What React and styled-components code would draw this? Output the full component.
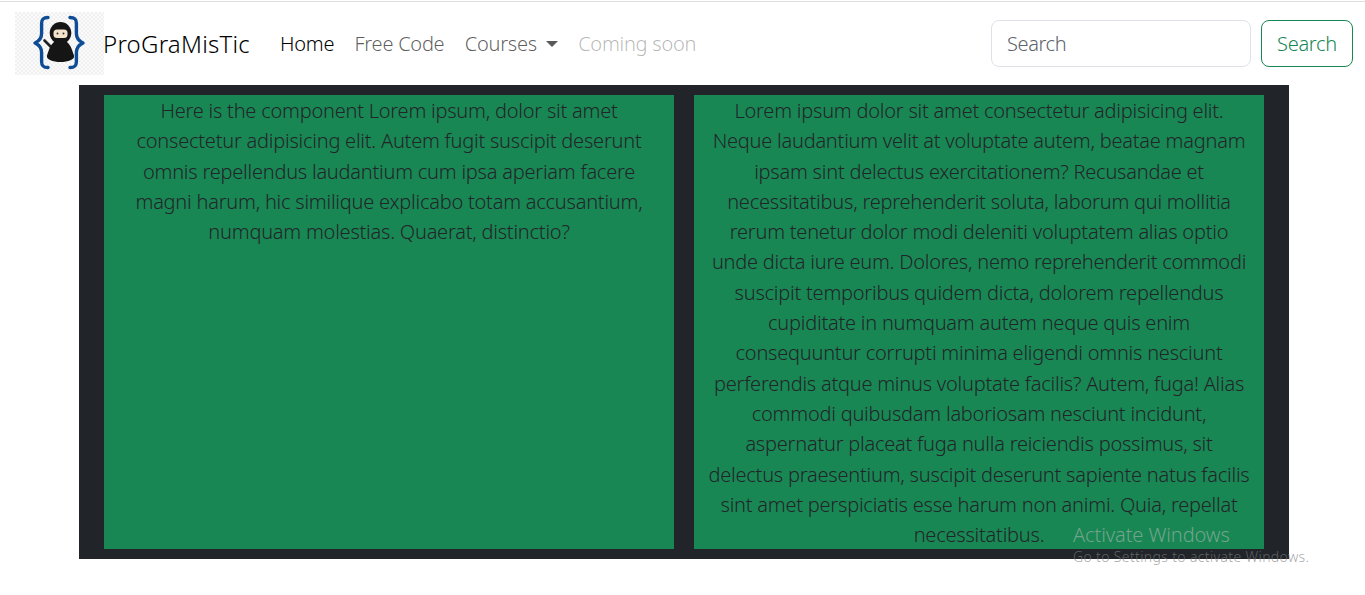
import React from "react";
import styled, { createGlobalStyle } from "styled-components";

const GlobalStyle = createGlobalStyle`
  body {
    margin: 0;
    background: #fff;
    font-family: "Noto Sans", "Open Sans", sans-serif;
    color: #212529;
  }
`;

const TopRule = styled.div`
  height: 1px;
  margin-top: 1px;
  background: #dedede;
`;

const Navbar = styled.nav`
  display: flex;
  align-items: center;
  height: 83px;
  padding: 0 12px 0 15px;
  box-sizing: border-box;
`;

const Brand = styled.a`
  display: flex;
  align-items: flex-end;
  width: 265px;
  font-size: 24px;
  font-weight: 300;
  color: #000;
  letter-spacing: 0.25px;
`;

const BrandName = styled.span`
  margin-left: -1px;
  line-height: 36px;
  margin-bottom: 13px;
`;

const Logo = styled.svg`
  width: 89px;
  height: 63px;
  flex: none;
`;

const Links = styled.ul`
  display: flex;
  align-items: center;
  gap: 20.3px;
  flex: 1;
  margin: 0;
  padding: 0;
  list-style: none;
  font-size: 20px;
  font-weight: 300;
`;

const Link = styled.li`
  color: ${(props) => props.color || "rgba(0, 0, 0, 0.65)"};
  letter-spacing: -0.25px;
`;

const Caret = styled.span`
  display: inline-block;
  margin-left: 9px;
  vertical-align: 4px;
  border-top: 6px solid rgba(0, 0, 0, 0.65);
  border-left: 6px solid transparent;
  border-right: 6px solid transparent;
`;

const SearchForm = styled.form`
  display: flex;
  gap: 10px;
`;

const SearchInput = styled.input`
  width: 260px;
  height: 47px;
  box-sizing: border-box;
  padding: 0 15px;
  border: 1px solid #dee2e6;
  border-radius: 8px;
  font: inherit;
  font-size: 20px;
  font-weight: 300;
  letter-spacing: -0.4px;
  color: #212529;
  &::placeholder {
    color: #5c636a;
    opacity: 1;
  }
`;

const SearchButton = styled.button`
  width: 92px;
  height: 47px;
  padding: 0;
  border: 1px solid #198754;
  border-radius: 8px;
  background: transparent;
  color: #198754;
  font: inherit;
  font-size: 20px;
  font-weight: 300;
  letter-spacing: -0.3px;
`;

const Content = styled.main`
  display: flex;
  gap: 20px;
  width: 1210px;
  height: 474px;
  box-sizing: border-box;
  margin: 0 0 0 79px;
  padding: 10px 25px;
  background: #212529;
`;

const Column = styled.div`
  flex: 1;
  padding-top: 1px;
  background: #198754;
  color: #212529;
  font-size: 20px;
  font-weight: 300;
  line-height: 30.29px;
  letter-spacing: -0.23px;
  text-align: center;
  white-space: nowrap;
`;

const Watermark = styled.div`
  position: absolute;
  left: 1073px;
  top: 522px;
  color: rgba(190, 190, 190, 0.55);
  font-family: "Noto Sans", sans-serif;
  font-weight: 300;
`;

const WatermarkTitle = styled.div`
  font-size: 20px;
  line-height: 26px;
  letter-spacing: -0.1px;
`;

const WatermarkNote = styled.div`
  font-size: 14px;
  line-height: 18px;
  letter-spacing: 0.36px;
  color: rgba(125, 125, 125, 0.7);
`;

const leftLines = [
  "Here is the component Lorem ipsum, dolor sit amet",
  "consectetur adipisicing elit. Autem fugit suscipit deserunt",
  "omnis repellendus laudantium cum ipsa aperiam facere",
  "magni harum, hic similique explicabo totam accusantium,",
  "numquam molestias. Quaerat, distinctio?",
];

const rightLines = [
  "Lorem ipsum dolor sit amet consectetur adipisicing elit.",
  "Neque laudantium velit at voluptate autem, beatae magnam",
  "ipsam sint delectus exercitationem? Recusandae et",
  "necessitatibus, reprehenderit soluta, laborum qui mollitia",
  "rerum tenetur dolor modi deleniti voluptatem alias optio",
  "unde dicta iure eum. Dolores, nemo reprehenderit commodi",
  "suscipit temporibus quidem dicta, dolorem repellendus",
  "cupiditate in numquam autem neque quis enim",
  "consequuntur corrupti minima eligendi omnis nesciunt",
  "perferendis atque minus voluptate facilis? Autem, fuga! Alias",
  "commodi quibusdam laboriosam nesciunt incidunt,",
  "aspernatur placeat fuga nulla reiciendis possimus, sit",
  "delectus praesentium, suscipit deserunt sapiente natus facilis",
  "sint amet perspiciatis esse harum non animi. Quia, repellat",
  "necessitatibus.",
];

const NinjaLogo = () => (
  <Logo viewBox="0 0 89 63">
    <defs>
      <pattern id="checker" width="4" height="4" patternUnits="userSpaceOnUse">
        <rect width="4" height="4" fill="#fbfbfb" />
        <rect width="2" height="2" fill="#f0f0f0" />
        <rect x="2" y="2" width="2" height="2" fill="#f0f0f0" />
      </pattern>
    </defs>
    <rect width="89" height="63" fill="url(#checker)" />
    <g fill="none" stroke="#0f4c96" strokeWidth="3.4" strokeLinecap="round" strokeLinejoin="round">
      <path d="M33 5.500c-4.500 0-6.400 1.600-6.400 6v10c0 4.500-2.400 7.500-6.600 9.500 4.200 2 6.600 5 6.600 9.500v9c0 4.400 1.900 6 6.400 6" />
      <path d="M55 5.500c4.500 0 6.400 1.600 6.400 6v10c0 4.500 2.400 7.500 6.600 9.500-4.200 2-6.600 5-6.600 9.500v9c0 4.400-1.900 6-6.400 6" />
    </g>
    <path d="M29.500 28.500l8 8" stroke="#222" strokeWidth="2.600" strokeLinecap="round" />
    <path d="M45.500 28c9 0 11 8 13.500 15.500 1.200 4-6 6.500-13.500 6.500s-14.700-2.500-13.500-6.500c2.500-7.500 4.500-15.500 13.500-15.500z" fill="#151515" />
    <ellipse cx="45.500" cy="21" rx="10.800" ry="11" fill="#151515" />
    <rect x="38.500" y="17.500" width="14" height="8.500" rx="3.500" fill="#f3e3cc" />
    <circle cx="42.500" cy="21.500" r="1" fill="#333" />
    <circle cx="48.500" cy="21.500" r="1" fill="#333" />
  </Logo>
);

const App = () => {
  return (
    <>
      <GlobalStyle />
      <TopRule />
      <Navbar>
        <Brand>
          <NinjaLogo />
          <BrandName>ProGraMisTic</BrandName>
        </Brand>
        <Links>
          <Link color="#000">Home</Link>
          <Link>Free Code</Link>
          <Link>
            Courses
            <Caret />
          </Link>
          <Link color="rgba(0, 0, 0, 0.3)">Coming soon</Link>
        </Links>
        <SearchForm>
          <SearchInput placeholder="Search" />
          <SearchButton type="button">Search</SearchButton>
        </SearchForm>
      </Navbar>
      <Content>
        <Column>
          {leftLines.map((line) => (
            <div key={line}>{line}</div>
          ))}
        </Column>
        <Column>
          {rightLines.map((line) => (
            <div key={line}>{line}</div>
          ))}
        </Column>
      </Content>
      <Watermark>
        <WatermarkTitle>Activate Windows</WatermarkTitle>
        <WatermarkNote>Go to Settings to activate Windows.</WatermarkNote>
      </Watermark>
    </>
  );
};

export default App;
